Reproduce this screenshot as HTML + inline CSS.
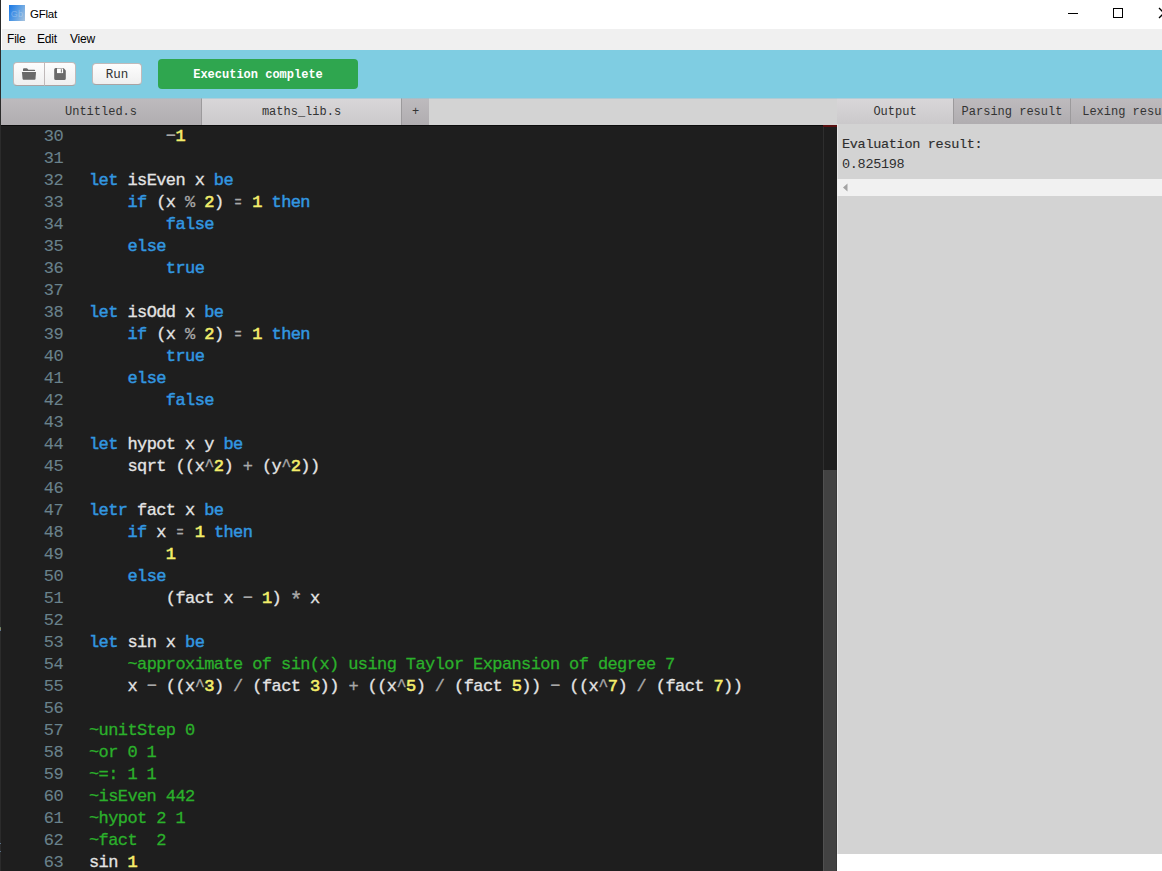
<!DOCTYPE html>
<html>
<head>
<meta charset="utf-8">
<title>GFlat</title>
<style>
*{box-sizing:border-box;margin:0;padding:0}
html,body{width:1162px;height:871px;overflow:hidden;background:#fff}
body{position:relative;font-family:"Liberation Sans",sans-serif;font-size:12px;color:#000}
.abs{position:absolute}
#edge{left:0;top:0;width:1px;height:871px;background:#2b2b2b}
#titlebar{left:1px;top:0;width:1161px;height:29px;background:#fff}
#appicon{left:9px;top:5px;width:16px;height:16px;background:linear-gradient(115deg,#1877e6 0%,#5a9ee4 50%,#a9c4de 100%);color:rgba(255,255,255,.28);font-size:9px;line-height:18px;text-align:center;letter-spacing:.3px;overflow:hidden}
#title{left:30px;top:7px;font-size:11.5px;line-height:15px;letter-spacing:-0.25px}
#menubar{left:2px;top:29px;width:1160px;height:21px;background:#f0f0f0}
.menu{top:32px;font-size:12px;line-height:15px;letter-spacing:-0.2px}
#toolbar{left:1px;top:50px;width:1161px;height:48px;background:#7fcde2}
.btn{background:linear-gradient(#fdfdfd,#efefef);border:1px solid #c0baba;border-bottom-color:#aaa3a3}
#b1{left:13px;top:62px;width:32px;height:24px;border-radius:4px 0 0 4px}
#b2{left:44px;top:62px;width:32px;height:24px;border-radius:0 4px 4px 0}
#run{left:92px;top:63px;width:50px;height:22px;border-radius:4px;font-family:"Liberation Mono",monospace;font-size:12.5px;line-height:22px;text-align:center;color:#333}
#status{left:158px;top:59px;width:200px;height:30px;border-radius:4px;background:#2fa64f;color:#fff;font-family:"Liberation Mono",monospace;font-weight:bold;font-size:12px;line-height:32px;text-align:center}
#tabbar{left:1px;top:98px;width:836px;height:27px;background:#d3d3d3}
.tab{top:98px;height:27px;font-family:"Liberation Mono",monospace;font-size:12px;line-height:29px;text-align:center;color:#333}
.tab.off{background:linear-gradient(#bebbbe,#b0adb0)}
.tab.on{background:linear-gradient(#d9d7d9,#cbc9cb)}
#editor{left:1px;top:125px;width:836px;height:746px;background:#1e1e1e;overflow:hidden;border-top:1px solid #0c0c0c}
#code{position:absolute;left:0;top:0px;font-family:"Liberation Mono",monospace;font-size:17px;letter-spacing:-0.6px;line-height:22px;white-space:pre;color:#dcdcdc;-webkit-text-stroke:0.3px}
#code .ln{display:inline-block;width:62px;text-align:right;color:#6a828c;margin-right:26px;-webkit-text-stroke:0.1px}
.e{display:inline-block;transform:scaleX(.7)}
.k{color:#3297e0;-webkit-text-stroke:0.45px}.n{color:#f4ee6b;-webkit-text-stroke:0.6px}.o{color:#a8a8a8}.c{color:#2bb02b}.i{color:#e4e4e4}
#sbar{left:823px;top:125px;width:14px;height:746px;background:#1e1e1e;border-left:1px solid #2e2e2e}
#sthumb{left:823px;top:470px;width:14px;height:401px;background:#424242;border-left:1px solid #505050;border-right:1px solid #393939}
#rpanel{left:837px;top:98px;width:325px;height:756px;background:#d3d3d3;border-left:1px solid #e4e4e4}
#out b{font-weight:normal;-webkit-text-stroke:0.15px}
#out{left:842px;top:135px;font-family:"Liberation Mono",monospace;font-size:13.5px;letter-spacing:-0.3px;line-height:20px;color:#2e2e2e;white-space:pre}
#hscroll{left:837px;top:179px;width:325px;height:17px;background:#f1f1f1}
</style>
</head>
<body>
<div class="abs" id="titlebar"></div>
<div class="abs" id="edge"></div>
<div class="abs" id="appicon">Gb</div>
<div class="abs" id="title">GFlat</div>
<svg class="abs" style="left:1060px;top:0" width="102" height="29" viewBox="0 0 102 29"><path d="M8 13.500h10" stroke="#000" stroke-width="1" fill="none"/><rect x="53.5" y="8.5" width="9" height="9" stroke="#000" stroke-width="1" fill="none"/><path d="M99 8l10 10M99 18l10 -10" stroke="#000" stroke-width="1.300" fill="none"/></svg>
<div class="abs" id="menubar"></div>
<div class="abs menu" style="left:7px">File</div>
<div class="abs menu" style="left:37px">Edit</div>
<div class="abs menu" style="left:70px">View</div>
<div class="abs" id="toolbar"></div>
<div class="abs btn" id="b1"></div>
<div class="abs btn" id="b2"></div>
<svg class="abs" style="left:21px;top:67px" width="16" height="14" viewBox="0 0 16 14"><path d="M2 3.900V2.200Q2 1.200 3 1.200H5.600Q6.300 1.200 6.800 1.900L7.400 2.700H13.400Q14.100 2.700 14.100 3.400V3.900Z" fill="#6a6a6a"/><path d="M0.900 5.100H15L14.500 12Q14.400 12.800 13.600 12.800H2.500Q1.700 12.800 1.600 12Z" fill="#6a6a6a"/></svg>
<svg class="abs" style="left:54px;top:67px" width="13" height="14" viewBox="0 0 13 14"><path d="M0.200 2.600Q0.200 1.100 1.700 1.100H9Q9.600 1.100 10 1.500L11.400 2.900Q11.800 3.300 11.800 3.900V11.500Q11.800 13 10.300 13H1.700Q0.200 13 0.200 11.500Z" fill="#6a6a6a"/><rect x="3" y="1.500" width="6.100" height="4.600" fill="#fff"/><rect x="6.800" y="2.200" width="1.200" height="3.300" fill="#8a8a8a"/></svg>
<div class="abs btn" id="run">Run</div>
<div class="abs" id="status">Execution complete</div>
<div class="abs" id="tabbar"></div>
<div class="abs tab off" style="left:1px;width:200px">Untitled.s</div>
<div class="abs tab on" style="left:201px;width:200px;border-left:1px solid #9c9a9c">maths_lib.s</div>
<div class="abs tab off" style="left:401px;width:28px;border-left:1px solid #9c9a9c">+</div>
<div class="abs" id="rpanel"></div>
<div class="abs tab on" style="left:837px;width:116px;height:26px">Output</div>
<div class="abs tab off" style="left:953px;width:117px;height:26px;border-left:1px solid #9c9a9c">Parsing result</div>
<div class="abs tab off" style="left:1070px;width:117px;height:26px;border-left:1px solid #9c9a9c">Lexing result</div>
<div class="abs" id="out"><b>Evaluation result:</b>
0.825198</div>
<div class="abs" id="hscroll"></div>
<svg class="abs" style="left:842px;top:183px" width="6" height="9" viewBox="0 0 6 9"><path d="M5.500 0.500v8L1 4.500z" fill="#a3a3a3"/></svg>
<div class="abs" id="editor">
<div id="code"><span class="ln">30</span>        <span class="o">−</span><span class="n">1</span>
<span class="ln">31</span>
<span class="ln">32</span><span class="k">let</span> <span class="i">isEven x</span> <span class="k">be</span>
<span class="ln">33</span>    <span class="k">if</span> <span class="i">(x</span> <span class="o">%</span> <span class="n">2</span><span class="i">)</span> <span class="o e">=</span> <span class="n">1</span> <span class="k">then</span>
<span class="ln">34</span>        <span class="k">false</span>
<span class="ln">35</span>    <span class="k">else</span>
<span class="ln">36</span>        <span class="k">true</span>
<span class="ln">37</span>
<span class="ln">38</span><span class="k">let</span> <span class="i">isOdd x</span> <span class="k">be</span>
<span class="ln">39</span>    <span class="k">if</span> <span class="i">(x</span> <span class="o">%</span> <span class="n">2</span><span class="i">)</span> <span class="o e">=</span> <span class="n">1</span> <span class="k">then</span>
<span class="ln">40</span>        <span class="k">true</span>
<span class="ln">41</span>    <span class="k">else</span>
<span class="ln">42</span>        <span class="k">false</span>
<span class="ln">43</span>
<span class="ln">44</span><span class="k">let</span> <span class="i">hypot x y</span> <span class="k">be</span>
<span class="ln">45</span>    <span class="i">sqrt ((x</span><span class="o">^</span><span class="n">2</span><span class="i">)</span> <span class="o">+</span> <span class="i">(y</span><span class="o">^</span><span class="n">2</span><span class="i">))</span>
<span class="ln">46</span>
<span class="ln">47</span><span class="k">letr</span> <span class="i">fact x</span> <span class="k">be</span>
<span class="ln">48</span>    <span class="k">if</span> <span class="i">x</span> <span class="o e">=</span> <span class="n">1</span> <span class="k">then</span>
<span class="ln">49</span>        <span class="n">1</span>
<span class="ln">50</span>    <span class="k">else</span>
<span class="ln">51</span>        <span class="i">(fact x</span> <span class="o">−</span> <span class="n">1</span><span class="i">)</span> <span class="o" style="display:inline-block;position:relative;top:3px;transform:scale(1.25)">*</span> <span class="i">x</span>
<span class="ln">52</span>
<span class="ln">53</span><span class="k">let</span> <span class="i">sin x</span> <span class="k">be</span>
<span class="ln">54</span>    <span class="c">~approximate of sin(x) using Taylor Expansion of degree 7</span>
<span class="ln">55</span>    <span class="i">x</span> <span class="o">−</span> <span class="i">((x</span><span class="o">^</span><span class="n">3</span><span class="i">)</span> <span class="o">/</span> <span class="i">(fact</span> <span class="n">3</span><span class="i">))</span> <span class="o">+</span> <span class="i">((x</span><span class="o">^</span><span class="n">5</span><span class="i">)</span> <span class="o">/</span> <span class="i">(fact</span> <span class="n">5</span><span class="i">))</span> <span class="o">−</span> <span class="i">((x</span><span class="o">^</span><span class="n">7</span><span class="i">)</span> <span class="o">/</span> <span class="i">(fact</span> <span class="n">7</span><span class="i">))</span>
<span class="ln">56</span>
<span class="ln">57</span><span class="c">~unitStep 0</span>
<span class="ln">58</span><span class="c">~or 0 1</span>
<span class="ln">59</span><span class="c">~=: 1 1</span>
<span class="ln">60</span><span class="c">~isEven 442</span>
<span class="ln">61</span><span class="c">~hypot 2 1</span>
<span class="ln">62</span><span class="c">~fact  2</span>
<span class="ln">63</span><span class="i">sin</span> <span class="n">1</span>
</div>
</div>
<div class="abs" id="sbar"></div>
<div class="abs" id="sthumb"></div>
<div class="abs" style="left:823px;top:125px;width:14px;height:2px;background:#5a1010"></div>
<div class="abs" style="left:1px;top:98px;width:1161px;height:1px;background:rgba(140,195,215,.5)"></div>
<div class="abs" style="left:0;top:627px;width:1px;height:4px;background:linear-gradient(#4a7a6a,#9a8a5a,#4a6a9a)"></div>
<div class="abs" style="left:0;top:843px;width:1px;height:1px;background:#5a7088"></div>
<div class="abs" style="left:0;top:851px;width:1px;height:1px;background:#5a7088"></div>
</body>
</html>
